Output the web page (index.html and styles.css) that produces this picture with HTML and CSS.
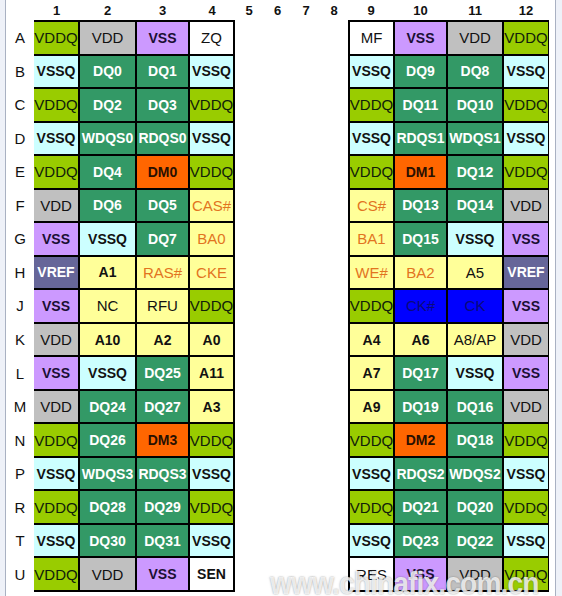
FILE: index.html
```html
<!DOCTYPE html>
<html lang="en">
<head>
  <meta charset="UTF-8">
  <title>Ball Map</title>
  <link rel="stylesheet" href="styles.css">
</head>
<body>
  <div class="sheet">
    <div class="head">
      <span></span>
      <span>1</span><span>2</span><span>3</span><span>4</span>
      <span>5</span><span>6</span><span>7</span><span>8</span>
      <span>9</span><span>10</span><span>11</span><span>12</span>
    </div>
    <div class="body">
      <div id="labels" class="labels"></div>
      <div id="left" class="block left"></div>
      <div class="spacer"></div>
      <div id="right" class="block right"></div>
    </div>
    <div class="mark">www.chinafix.com.cn</div>
  </div>

  <script>
    const rows = [
      ['A', 'VDDQ VDD VSS ZQ', 'MF VSS VDD VDDQ'],
      ['B', 'VSSQ DQ0 DQ1 VSSQ', 'VSSQ DQ9 DQ8 VSSQ'],
      ['C', 'VDDQ DQ2 DQ3 VDDQ', 'VDDQ DQ11 DQ10 VDDQ'],
      ['D', 'VSSQ WDQS0 RDQS0 VSSQ', 'VSSQ RDQS1 WDQS1 VSSQ'],
      ['E', 'VDDQ DQ4 DM0 VDDQ', 'VDDQ DM1 DQ12 VDDQ'],
      ['F', 'VDD DQ6 DQ5 CAS#', 'CS# DQ13 DQ14 VDD'],
      ['G', 'VSS VSSQ DQ7 BA0', 'BA1 DQ15 VSSQ VSS'],
      ['H', 'VREF A1 RAS# CKE', 'WE# BA2 A5 VREF'],
      ['J', 'VSS NC RFU VDDQ', 'VDDQ CK# CK VSS'],
      ['K', 'VDD A10 A2 A0', 'A4 A6 A8/AP VDD'],
      ['L', 'VSS VSSQ DQ25 A11', 'A7 DQ17 VSSQ VSS'],
      ['M', 'VDD DQ24 DQ27 A3', 'A9 DQ19 DQ16 VDD'],
      ['N', 'VDDQ DQ26 DM3 VDDQ', 'VDDQ DM2 DQ18 VDDQ'],
      ['P', 'VSSQ WDQS3 RDQS3 VSSQ', 'VSSQ RDQS2 WDQS2 VSSQ'],
      ['R', 'VDDQ DQ28 DQ29 VDDQ', 'VDDQ DQ21 DQ20 VDDQ'],
      ['T', 'VSSQ DQ30 DQ31 VSSQ', 'VSSQ DQ23 DQ22 VSSQ'],
      ['U', 'VDDQ VDD VSS SEN', 'RES VSS VDD VDDQ']
    ];

    const orange = ['CAS#', 'CS#', 'BA0', 'BA1', 'RAS#', 'CKE', 'WE#', 'BA2'];
    const plain = ['VDDQ', 'VDD', 'ZQ', 'MF', 'NC', 'RFU', 'RES', 'A5', 'A8/AP', 'CK', 'CK#'];

    function kind(name) {
      if (name === 'VDDQ') return 'vddq';
      if (name === 'VDD') return 'vdd';
      if (name === 'VSS') return 'vss';
      if (name === 'VSSQ') return 'vssq';
      if (name === 'VREF') return 'vref';
      if (/^(DQ|WDQS|RDQS)/.test(name)) return 'dq';
      if (name.startsWith('DM')) return 'dm';
      if (name.startsWith('CK') && name !== 'CKE') return 'ck';
      if (['ZQ', 'MF', 'SEN', 'RES'].includes(name)) return 'wht';
      if (orange.includes(name)) return 'yel org';
      return 'yel';
    }

    function addCells(target, list) {
      list.split(' ').forEach(name => {
        const cell = document.createElement('div');
        cell.className = 'cell ' + kind(name) + (plain.includes(name) || orange.includes(name) ? ' thin' : '');
        cell.textContent = name;
        target.appendChild(cell);
      });
    }

    const labels = document.getElementById('labels');
    const left = document.getElementById('left');
    const right = document.getElementById('right');

    rows.forEach(([label, l, r]) => {
      const lab = document.createElement('div');
      lab.textContent = label;
      labels.appendChild(lab);
      addCells(left, l);
      addCells(right, r);
    });
  </script>
</body>
</html>
```

FILE: styles.css
```css
body {
  margin: 0;
  background-color: #eef1f8;
  font-family: "Liberation Sans", Arial, sans-serif;
}
.sheet {
  position: relative;
  margin-left: 5px;
  width: 549px;
  height: 596px;
  background: #fff;
  border-left: 1px solid #a9b1c2;
  border-right: 1px solid #a9b1c2;
  overflow: hidden;
}
.head {
  display: grid;
  grid-template-columns: 28px 45px 57px 53px 46px 28px 29px 28px 28px 46px 53px 56px 46px;
  height: 20px;
  align-items: center;
  text-align: center;
  font-weight: bold;
  font-size: 13px;
  color: #111;
}
.body {
  display: flex;
  height: 572px;
}
.labels {
  width: 28px;
  display: grid;
  grid-template-rows: repeat(17, 1fr);
  padding: 2px 0;
  row-gap: 2px;
  align-items: center;
  text-align: center;
  font-size: 15px;
  color: #111;
}
.block {
  display: grid;
  grid-template-rows: repeat(17, 1fr);
  gap: 2px;
  background: #000;
}
.block.left {
  grid-template-columns: 44px 55px 51px 43px;
  padding: 2px 2px 2px 0;
}
.block.right {
  grid-template-columns: 43px 51px 54px 44px;
  padding: 2px 1px 2px 2px;
}
.spacer {
  width: 113px;
}
.cell {
  display: flex;
  justify-content: center;
  align-items: center;
  font-size: 14px;
  font-weight: bold;
  color: #111;
  white-space: nowrap;
}
.cell.thin {
  font-weight: normal;
  font-size: 15px;
}
.vddq { background-color: #99cc00; color: #10200a; }
.vdd { background-color: #c0c0c0; }
.vss { background-color: #cc99ff; color: #1a0f33; }
.vssq { background-color: #ccffff; }
.vref { background-color: #666699; color: #fff; }
.dq { background-color: #339966; color: #fff; }
.dm { background-color: #ff6600; color: #2a1000; }
.ck { background-color: #0000ff; color: #0a0a7a; }
.wht { background-color: #fff; }
.yel { background-color: #ffff99; }
.yel.org { color: #e2741f; }
.mark {
  position: absolute;
  left: 264px;
  top: 565px;
  font-size: 32px;
  font-weight: bold;
  letter-spacing: -1px;
  transform: scaleX(0.88);
  transform-origin: left top;
  color: rgba(255, 255, 255, 0.8);
  text-shadow: 0 0 2px rgba(80, 80, 80, 0.6);
  white-space: nowrap;
}
```
